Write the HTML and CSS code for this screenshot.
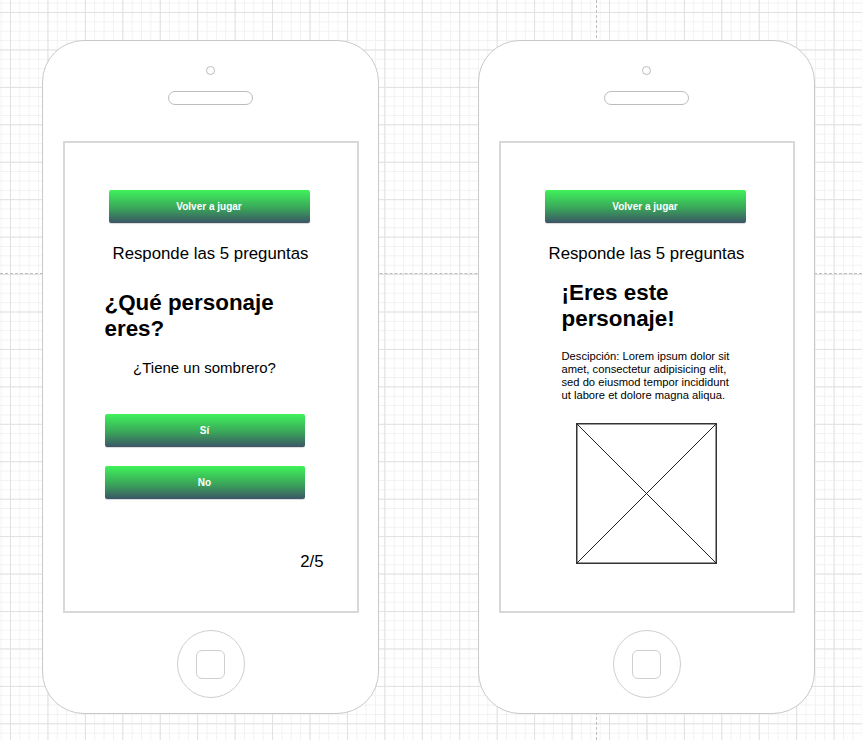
FILE: index.html
```html
<!DOCTYPE html>
<html lang="es">
<head>
    <meta charset="UTF-8">
    <meta name="viewport" content="width=device-width, initial-scale=1.0">
    <title>¿Qué personaje eres? - Mockup</title>
    <link rel="stylesheet" href="styles.css">
</head>
<body>
    <div class="canvas">
        <div class="guide guide-h"></div>
        <div class="guide guide-v"></div>

        <!-- Pantalla de pregunta -->
        <div class="phone">
            <div class="camera"></div>
            <div class="speaker"></div>
            <div class="screen">
                <button class="btn btn-top" type="button">Volver a jugar</button>
                <p class="subtitle">Responde las 5 preguntas</p>
                <div class="quiz">
                    <h1 class="title">¿Qué personaje eres?</h1>
                    <p class="question">¿Tiene un sombrero?</p>
                    <button class="btn btn-answer btn-yes" type="button">Sí</button>
                    <button class="btn btn-answer btn-no" type="button">No</button>
                </div>
                <p class="progress">2/5</p>
            </div>
            <div class="home"><div class="home-key"></div></div>
        </div>

        <!-- Pantalla de resultado -->
        <div class="phone">
            <div class="camera"></div>
            <div class="speaker"></div>
            <div class="screen">
                <button class="btn btn-top" type="button">Volver a jugar</button>
                <p class="subtitle">Responde las 5 preguntas</p>
                <div class="result">
                    <h1 class="title result-title">¡Eres este personaje!</h1>
                    <p class="description">Descipción: Lorem ipsum dolor sit amet, consectetur adipisicing elit, sed do eiusmod tempor incididunt ut labore et dolore magna aliqua.</p>
                    <svg class="portrait" width="141" height="141" viewBox="0 0 141 141">
                        <rect x="0.75" y="0.75" width="139.5" height="139.5" fill="#fff" stroke="#333" stroke-width="1.5"/>
                        <line x1="1" y1="1" x2="140" y2="140" stroke="#222" stroke-width="1"/>
                        <line x1="140" y1="1" x2="1" y2="140" stroke="#222" stroke-width="1"/>
                    </svg>
                </div>
            </div>
            <div class="home"><div class="home-key"></div></div>
        </div>
    </div>
</body>
</html>
```

FILE: styles.css
```css
body {
    margin: 0;
    width: 862px;
    height: 740px;
    overflow: hidden;
    font-family: "Liberation Sans", Arial, sans-serif;
    color: #000;
    background-color: #fff;
    background-image:
        linear-gradient(#e1e1e1 1px, transparent 1px),
        linear-gradient(90deg, #e1e1e1 1px, transparent 1px),
        linear-gradient(#f1f1f1 1px, transparent 1px),
        linear-gradient(90deg, #f1f1f1 1px, transparent 1px);
    background-size: 37.44px 37.44px, 37.44px 37.44px, 9.36px 9.36px, 9.36px 9.36px;
    background-position: 10px 12px;
}
.canvas {
    position: relative;
    display: flex;
    gap: 99px;
    padding: 40px 0 0 42px;
    height: 740px;
    box-sizing: border-box;
}
.guide {
    position: absolute;
    z-index: 0;
}
.guide-h {
    left: 0;
    right: 0;
    top: 273px;
    border-top: 1px dashed #bdbdbd;
}
.guide-v {
    top: 0;
    bottom: 0;
    left: 596px;
    border-left: 1px dashed #bdbdbd;
}
.phone {
    position: relative;
    z-index: 1;
    width: 337px;
    height: 674px;
    box-sizing: border-box;
    border: 1px solid #c9c9c9;
    border-radius: 42px;
    background-color: #fff;
    display: flex;
    flex-direction: column;
    align-items: center;
}
.camera {
    width: 9px;
    height: 9px;
    box-sizing: border-box;
    border: 1px solid #bcbcbc;
    border-radius: 50%;
    margin-top: 25px;
}
.speaker {
    width: 85px;
    height: 14px;
    box-sizing: border-box;
    border: 1px solid #bcbcbc;
    border-radius: 7px;
    margin-top: 16px;
}
.screen {
    width: 296px;
    height: 472px;
    box-sizing: border-box;
    border: 2px solid #d8d8d8;
    margin-top: 36px;
    padding-top: 47px;
    display: flex;
    flex-direction: column;
}
.home {
    width: 68px;
    height: 68px;
    box-sizing: border-box;
    border: 1px solid #cfcfcf;
    border-radius: 50%;
    margin-top: 17px;
    display: flex;
    align-items: center;
    justify-content: center;
}
.home-key {
    width: 29px;
    height: 29px;
    box-sizing: border-box;
    border: 1px solid #cfcfcf;
    border-radius: 6px;
}
.btn {
    display: block;
    height: 33px;
    border: none;
    border-radius: 2px;
    background: linear-gradient(#3ff25a, #3aa55a 55%, #3b5566);
    box-shadow: 0 1px 1px rgba(0, 0, 0, 0.15);
    color: #fff;
    font-family: "Liberation Sans", Arial, sans-serif;
    font-size: 10px;
    font-weight: bold;
    padding: 0 0 1px;
    cursor: pointer;
}
.btn-top {
    width: 201px;
    margin-left: 44px;
}
.subtitle {
    margin: 21px 0 0;
    font-size: 16.8px;
    line-height: 19px;
    text-align: center;
}
.quiz {
    margin-left: 39px;
    width: 202px;
}
.title {
    margin: 27px 0 0 1px;
    font-size: 22.4px;
    line-height: 26px;
    font-weight: bold;
}
.question {
    margin: 17px 0 0;
    font-size: 15px;
    line-height: 18px;
    text-align: center;
}
.btn-answer {
    width: 200px;
    margin-left: 1px;
}
.btn-yes {
    margin-top: 37px;
}
.btn-no {
    margin-top: 19px;
}
.progress {
    margin: 53px 0 0;
    padding-right: 33px;
    font-size: 16.8px;
    line-height: 19px;
    text-align: right;
}
.result {
    margin-left: 61px;
    width: 174px;
}
.result-title {
    margin: 17px 0 0;
}
.description {
    margin: 18px 0 0;
    font-size: 11.2px;
    line-height: 13px;
}
.portrait {
    display: block;
    margin: 21px 0 0 14px;
}
```
